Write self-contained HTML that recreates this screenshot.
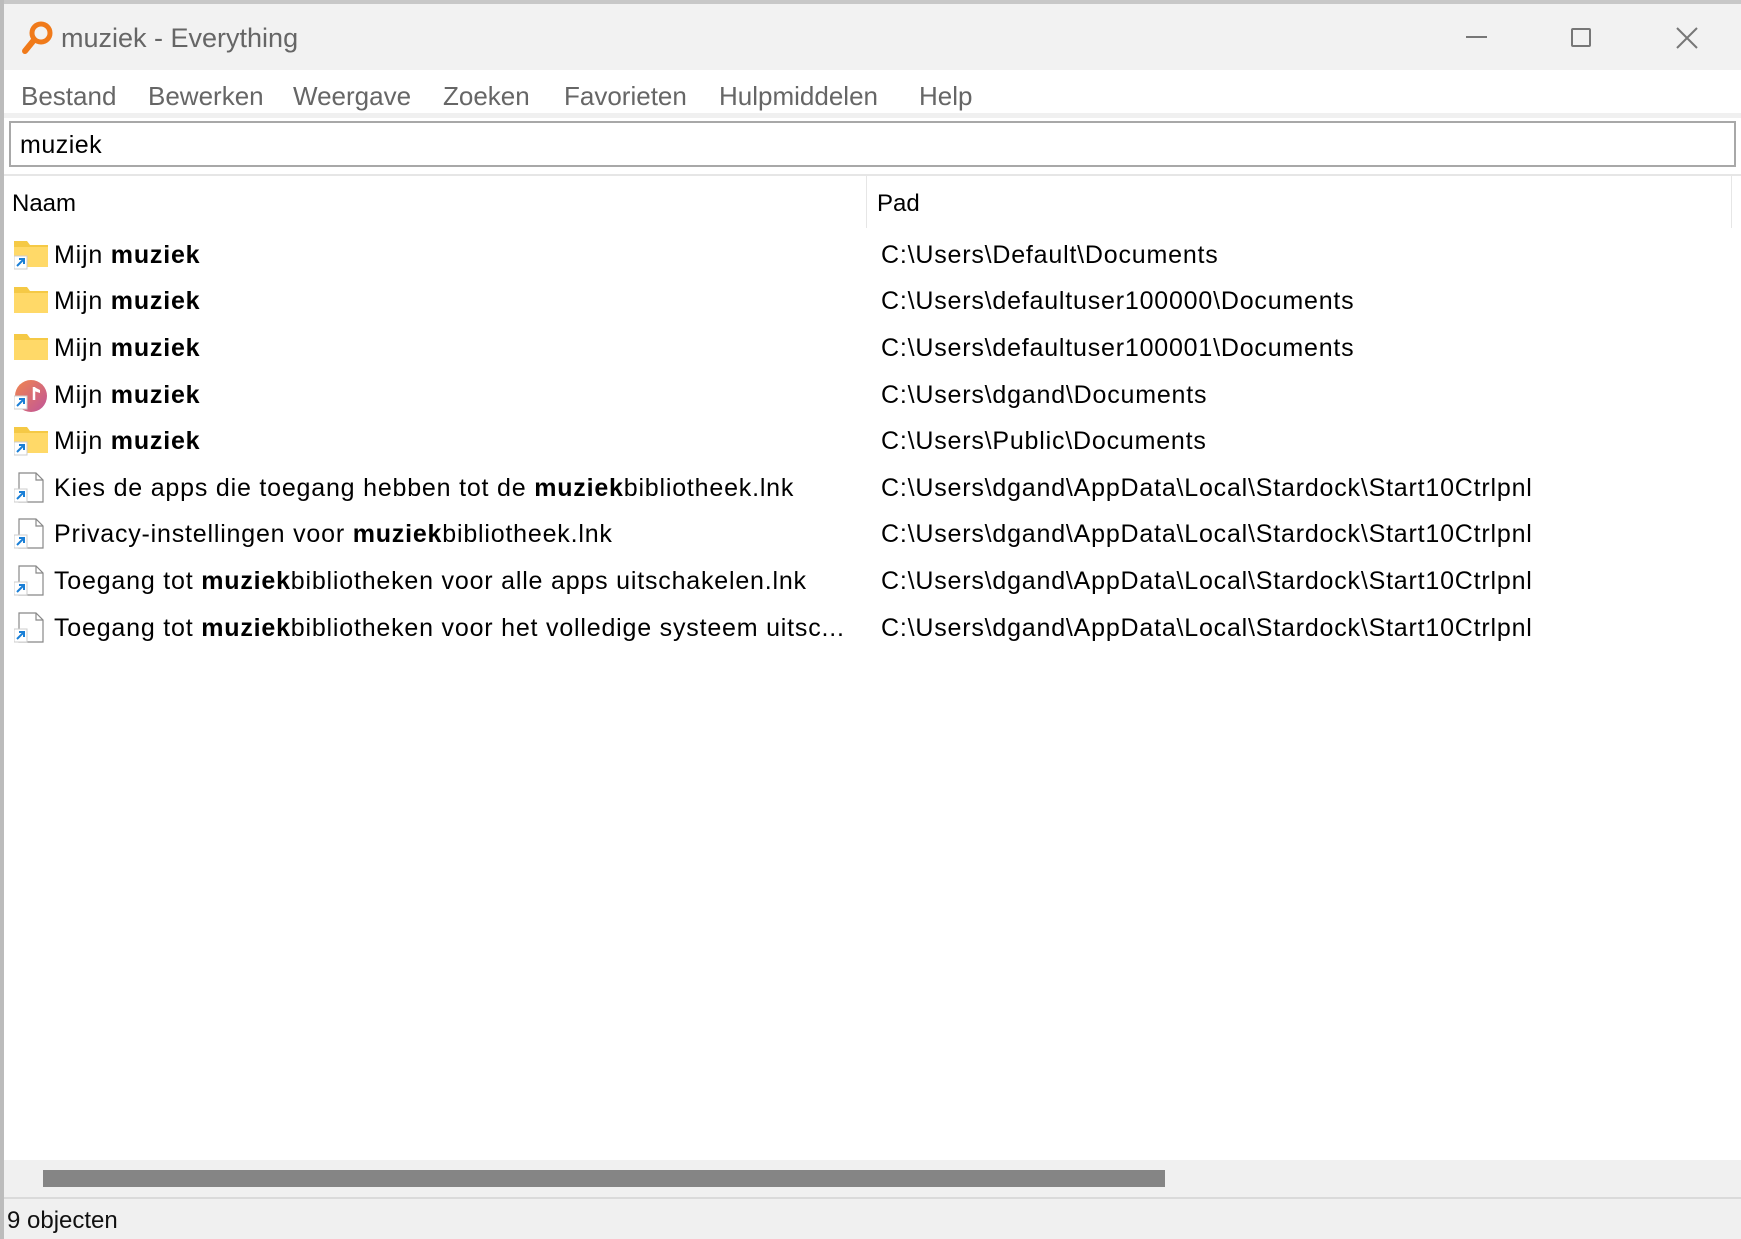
<!DOCTYPE html>
<html><head><meta charset="utf-8"><style>
*{margin:0;padding:0;box-sizing:border-box}
body{width:1741px;height:1239px;background:#fff;font-family:"Liberation Sans",sans-serif;position:relative;overflow:hidden;color:#000}
.a{position:absolute;white-space:nowrap}
.row{position:absolute;height:46px;line-height:46px;font-size:25px;letter-spacing:0.8px;white-space:nowrap}
b{font-weight:bold}
</style></head><body>
<div class="a" style="left:0;top:0;width:1741px;height:4px;background:#c8c8c8"></div>
<div class="a" style="left:0;top:0;width:4px;height:1239px;background:#bcbcbc"></div>
<div class="a" style="left:4px;top:4px;width:1737px;height:66px;background:#f2f2f2"></div>
<svg class="a" style="left:20px;top:20px" width="36" height="36" viewBox="0 0 36 36"><circle cx="21" cy="13" r="9" fill="none" stroke="#f07a1a" stroke-width="5"/><line x1="14" y1="20" x2="5" y2="31" stroke="#f07a1a" stroke-width="6" stroke-linecap="round"/></svg>
<div class="a" style="left:61px;top:23px;font-size:27px;color:#666">muziek - Everything</div>
<div class="a" style="left:1466px;top:36px;width:21px;height:2px;background:#777"></div>
<div class="a" style="left:1571px;top:28px;width:20px;height:19px;border:2px solid #777;border-radius:2px"></div>
<svg class="a" style="left:1676px;top:27px" width="22" height="22"><path d="M1 1L21 21M21 1L1 21" stroke="#777" stroke-width="2"/></svg>
<div class="a" style="left:21px;top:81px;font-size:26px;color:#666">
<span style="position:absolute;left:0">Bestand</span><span style="position:absolute;left:127px">Bewerken</span><span style="position:absolute;left:272px">Weergave</span><span style="position:absolute;left:422px">Zoeken</span><span style="position:absolute;left:543px">Favorieten</span><span style="position:absolute;left:698px">Hulpmiddelen</span><span style="position:absolute;left:898px">Help</span></div>
<div class="a" style="left:4px;top:113px;width:1737px;height:5px;background:#f0f0f0"></div>
<div class="a" style="left:9px;top:121px;width:1727px;height:46px;border:2px solid #a8a8a8;background:#fff"></div>
<div class="a" style="left:20px;top:131px;font-size:25px;letter-spacing:0.5px">muziek</div>
<div class="a" style="left:4px;top:174px;width:1737px;height:2px;background:#e6e6e6"></div>
<div class="a" style="left:12px;top:190px;font-size:24px">Naam</div>
<div class="a" style="left:866px;top:176px;width:1px;height:52px;background:#e6e6e6"></div>
<div class="a" style="left:1731px;top:176px;width:1px;height:52px;background:#e6e6e6"></div>
<div class="a" style="left:877px;top:190px;font-size:24px">Pad</div>

<svg width="0" height="0" style="position:absolute"><defs>
<g id="fold"><path d="M0 2h13l3 4h18v22H0z" fill="#f5c945"/><path d="M0 8h34v20H0z" fill="#ffd968"/></g>
<g id="sc"><rect x="0" y="17" width="13" height="13" fill="#fff" stroke="#ccc"/><path d="M3 27l7-7M5 20h5v5" stroke="#1a7fd6" stroke-width="2" fill="none"/></g>
<g id="doc"><path d="M5 1h17l7 7v22H5z" fill="#fff" stroke="#888" stroke-width="1.2"/><path d="M22 1v7h7" fill="none" stroke="#888" stroke-width="1.2"/></g>
</defs></svg>

<div class="row" style="left:14px;top:232px"><svg width="36" height="34" style="vertical-align:middle"><use href="#fold"/><use href="#sc"/></svg></div>
<div class="row" style="left:14px;top:278px"><svg width="36" height="34" style="vertical-align:middle"><use href="#fold"/></svg></div>
<div class="row" style="left:14px;top:325px"><svg width="36" height="34" style="vertical-align:middle"><use href="#fold"/></svg></div>
<div class="row" style="left:14px;top:372px"><svg width="36" height="34" style="vertical-align:middle"><defs><linearGradient id="g" x1="0" y1="0" x2="1" y2="1"><stop offset="0" stop-color="#f0864f"/><stop offset="1" stop-color="#c0549a"/></linearGradient></defs><circle cx="17" cy="17" r="16" fill="url(#g)"/><path d="M20 8v13" stroke="#fff" stroke-width="2.5"/><path d="M20 8l6 3v3l-6-2z" fill="#fff"/><use href="#sc"/></svg></div>
<div class="row" style="left:14px;top:418px"><svg width="36" height="34" style="vertical-align:middle"><use href="#fold"/><use href="#sc"/></svg></div>
<div class="row" style="left:14px;top:465px"><svg width="36" height="34" style="vertical-align:middle"><use href="#doc"/><use href="#sc"/></svg></div>
<div class="row" style="left:14px;top:511px"><svg width="36" height="34" style="vertical-align:middle"><use href="#doc"/><use href="#sc"/></svg></div>
<div class="row" style="left:14px;top:558px"><svg width="36" height="34" style="vertical-align:middle"><use href="#doc"/><use href="#sc"/></svg></div>
<div class="row" style="left:14px;top:605px"><svg width="36" height="34" style="vertical-align:middle"><use href="#doc"/><use href="#sc"/></svg></div>

<div class="row" style="left:54px;top:232px">Mijn <b>muziek</b></div>
<div class="row" style="left:54px;top:278px">Mijn <b>muziek</b></div>
<div class="row" style="left:54px;top:325px">Mijn <b>muziek</b></div>
<div class="row" style="left:54px;top:372px">Mijn <b>muziek</b></div>
<div class="row" style="left:54px;top:418px">Mijn <b>muziek</b></div>
<div class="row" style="left:54px;top:465px">Kies de apps die toegang hebben tot de <b>muziek</b>bibliotheek.lnk</div>
<div class="row" style="left:54px;top:511px">Privacy-instellingen voor <b>muziek</b>bibliotheek.lnk</div>
<div class="row" style="left:54px;top:558px">Toegang tot <b>muziek</b>bibliotheken voor alle apps uitschakelen.lnk</div>
<div class="row" style="left:54px;top:605px;width:810px;overflow:hidden">Toegang tot <b>muziek</b>bibliotheken voor het volledige systeem uitsc...</div>

<div class="row" style="left:881px;top:232px">C:\Users\Default\Documents</div>
<div class="row" style="left:881px;top:278px">C:\Users\defaultuser100000\Documents</div>
<div class="row" style="left:881px;top:325px">C:\Users\defaultuser100001\Documents</div>
<div class="row" style="left:881px;top:372px">C:\Users\dgand\Documents</div>
<div class="row" style="left:881px;top:418px">C:\Users\Public\Documents</div>
<div class="row" style="left:881px;top:465px">C:\Users\dgand\AppData\Local\Stardock\Start10Ctrlpnl</div>
<div class="row" style="left:881px;top:511px">C:\Users\dgand\AppData\Local\Stardock\Start10Ctrlpnl</div>
<div class="row" style="left:881px;top:558px">C:\Users\dgand\AppData\Local\Stardock\Start10Ctrlpnl</div>
<div class="row" style="left:881px;top:605px">C:\Users\dgand\AppData\Local\Stardock\Start10Ctrlpnl</div>

<div class="a" style="left:4px;top:1160px;width:1737px;height:38px;background:#f0f0f0"></div>
<div class="a" style="left:43px;top:1170px;width:1122px;height:17px;background:#858585"></div>
<div class="a" style="left:4px;top:1197px;width:1737px;height:2px;background:#dadada"></div>
<div class="a" style="left:4px;top:1199px;width:1737px;height:40px;background:#f0f0f0"></div>
<div class="a" style="left:7px;top:1207px;font-size:24px;color:#111">9 objecten</div>
</body></html>
